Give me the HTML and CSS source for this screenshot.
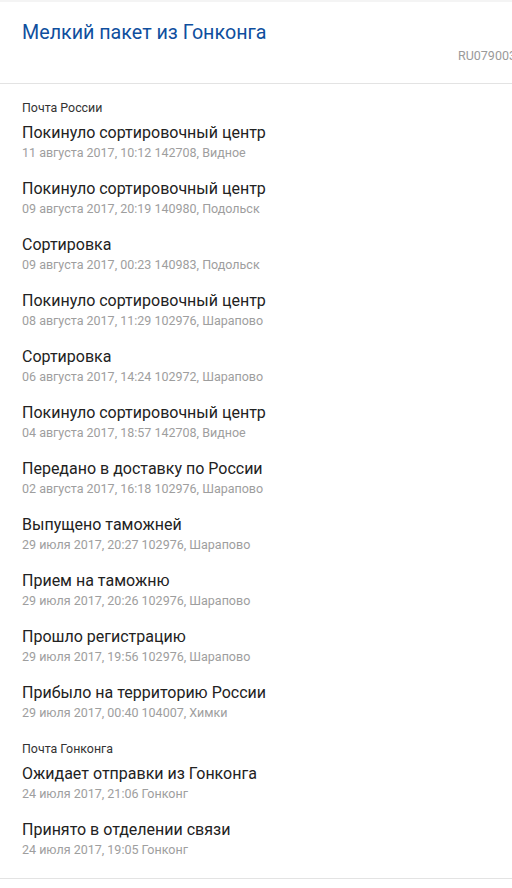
FILE: index.html
```html
<!DOCTYPE html>
<html lang="ru">
<head>
<meta charset="utf-8">
<title>Мелкий пакет из Гонконга</title>
<link rel="stylesheet" href="styles.css">
</head>
<body>
<div class="topstrip"></div>
<header class="header">
  <h1 class="title">Мелкий пакет из Гонконга</h1>
  <div class="track">RU079003165HK</div>
</header>
<main class="history">
  <section class="group">
    <div class="group-label">Почта России</div>
    <div class="event"><div class="event-name">Покинуло сортировочный центр</div><div class="event-info">11 августа 2017, 10:12 142708, Видное</div></div>
    <div class="event"><div class="event-name">Покинуло сортировочный центр</div><div class="event-info">09 августа 2017, 20:19 140980, Подольск</div></div>
    <div class="event"><div class="event-name">Сортировка</div><div class="event-info">09 августа 2017, 00:23 140983, Подольск</div></div>
    <div class="event"><div class="event-name">Покинуло сортировочный центр</div><div class="event-info">08 августа 2017, 11:29 102976, Шарапово</div></div>
    <div class="event"><div class="event-name">Сортировка</div><div class="event-info">06 августа 2017, 14:24 102972, Шарапово</div></div>
    <div class="event"><div class="event-name">Покинуло сортировочный центр</div><div class="event-info">04 августа 2017, 18:57 142708, Видное</div></div>
    <div class="event"><div class="event-name">Передано в доставку по России</div><div class="event-info">02 августа 2017, 16:18 102976, Шарапово</div></div>
    <div class="event"><div class="event-name">Выпущено таможней</div><div class="event-info">29 июля 2017, 20:27 102976, Шарапово</div></div>
    <div class="event"><div class="event-name">Прием на таможню</div><div class="event-info">29 июля 2017, 20:26 102976, Шарапово</div></div>
    <div class="event"><div class="event-name">Прошло регистрацию</div><div class="event-info">29 июля 2017, 19:56 102976, Шарапово</div></div>
    <div class="event"><div class="event-name">Прибыло на территорию России</div><div class="event-info">29 июля 2017, 00:40 104007, Химки</div></div>
  </section>
  <section class="group">
    <div class="group-label">Почта Гонконга</div>
    <div class="event"><div class="event-name">Ожидает отправки из Гонконга</div><div class="event-info">24 июля 2017, 21:06 Гонконг</div></div>
    <div class="event"><div class="event-name">Принято в отделении связи</div><div class="event-info">24 июля 2017, 19:05 Гонконг</div></div>
  </section>
</main>
</body>
</html>
```
FILE: styles.css
```css
html, body {
  margin: 0;
  padding: 0;
  background: #ffffff;
}
body {
  font-family: Roboto, "Noto Sans", "Liberation Sans", sans-serif;
  width: 512px;
  overflow: hidden;
}
.topstrip {
  height: 2px;
  background: #f4f4f4;
}
.header {
  padding: 19px 0 19px 22px;
  border-bottom: 1px solid #e3e3e3;
}
.title {
  margin: 0;
  font-size: 19.7px;
  line-height: 24px;
  font-weight: 400;
  color: #0f4f9e;
}
.track {
  margin-top: 3px;
  padding-left: 436px;
  font-size: 12.5px;
  line-height: 16px;
  color: #9a9a9a;
  white-space: nowrap;
  overflow: hidden;
}
.history {
  padding: 16px 0 19px 22px;
  border-bottom: 1px solid #e3e3e3;
  display: flex;
  flex-direction: column;
  gap: 19px;
}
.group {
  display: flex;
  flex-direction: column;
  gap: 17px;
}
.group-label {
  font-size: 12.4px;
  line-height: 16px;
  color: #333333;
  margin-bottom: -10px;
}
.event-name {
  font-size: 16px;
  line-height: 20px;
  color: #222222;
}
.event-info {
  margin-top: 1px;
  font-size: 12.5px;
  line-height: 18px;
  color: #9e9e9e;
}
```
